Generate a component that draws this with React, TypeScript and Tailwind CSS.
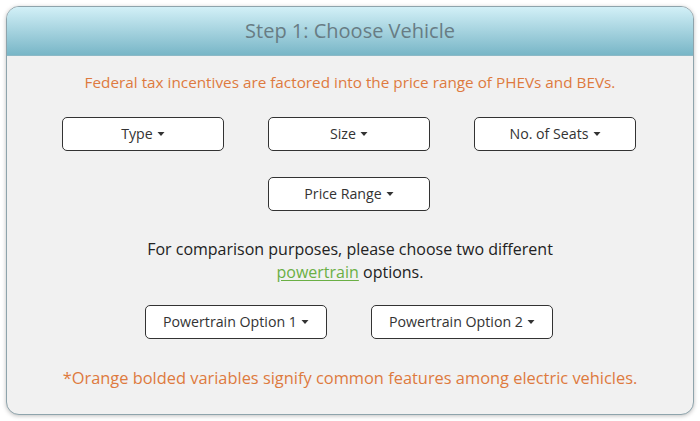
import React from 'react';

const Caret: React.FC = () => (
    <svg width="8" height="5" viewBox="0 0 8 5" className="ml-[4px] inline-block">
        <path d="M0.5 0 L7.5 0 L4 4 Z" fill="#333" />
    </svg>
);

const Dropdown: React.FC<{ label: string; width: string }> = ({ label, width }) => (
    <button
        className={`${width} h-[34px] flex items-center justify-center rounded-[5px] border border-[#333] bg-white text-[14.2px] text-[#333]`}
    >
        {label}
        <Caret />
    </button>
);

const App: React.FC = () => {
    return (
        <div className="w-[700px] h-[421px] bg-white p-[6px] font-['Open_Sans',sans-serif]">
            <div className="h-[409px] rounded-[13px] border border-[#8ea4ac] bg-[#f1f1f1] shadow-[0_1px_4px_rgba(0,0,0,0.25)] overflow-hidden flex flex-col">
                {/* Header */}
                <div className="h-[49px] flex items-center justify-center bg-gradient-to-b from-[#d2f0f7] to-[#78b6c7] border-b border-[#8cb9c6]">
                    <h1 className="text-[20px] text-[#687c84]">Step 1: Choose Vehicle</h1>
                </div>

                <div className="flex flex-col items-center pt-[14px]">
                    <p className="text-[15.3px] leading-[24px] text-[#de7a3e]">
                        Federal tax incentives are factored into the price range of PHEVs and BEVs.
                    </p>

                    <div className="mt-[23px] flex gap-[44px] -translate-x-[1px]">
                        <Dropdown label="Type" width="w-[162px]" />
                        <Dropdown label="Size" width="w-[162px]" />
                        <Dropdown label="No. of Seats" width="w-[162px]" />
                    </div>
                    <div className="mt-[26px] flex -translate-x-[1px]">
                        <Dropdown label="Price Range" width="w-[162px]" />
                    </div>

                    <p className="mt-[27px] text-center text-[16px] leading-[23px] text-[#222]">
                        For comparison purposes, please choose two different
                        <br />
                        <a href="#" className="text-[#6aaf44] underline underline-offset-2">powertrain</a> options.
                    </p>

                    <div className="mt-[21px] flex gap-[44px] -translate-x-[1px]">
                        <Dropdown label="Powertrain Option 1" width="w-[182px]" />
                        <Dropdown label="Powertrain Option 2" width="w-[182px]" />
                    </div>

                    <p className="mt-[27px] text-[16.4px] leading-[24px] text-[#de7a3e]">
                        *Orange bolded variables signify common features among electric vehicles.
                    </p>
                </div>
            </div>
        </div>
    );
};

export default App;
